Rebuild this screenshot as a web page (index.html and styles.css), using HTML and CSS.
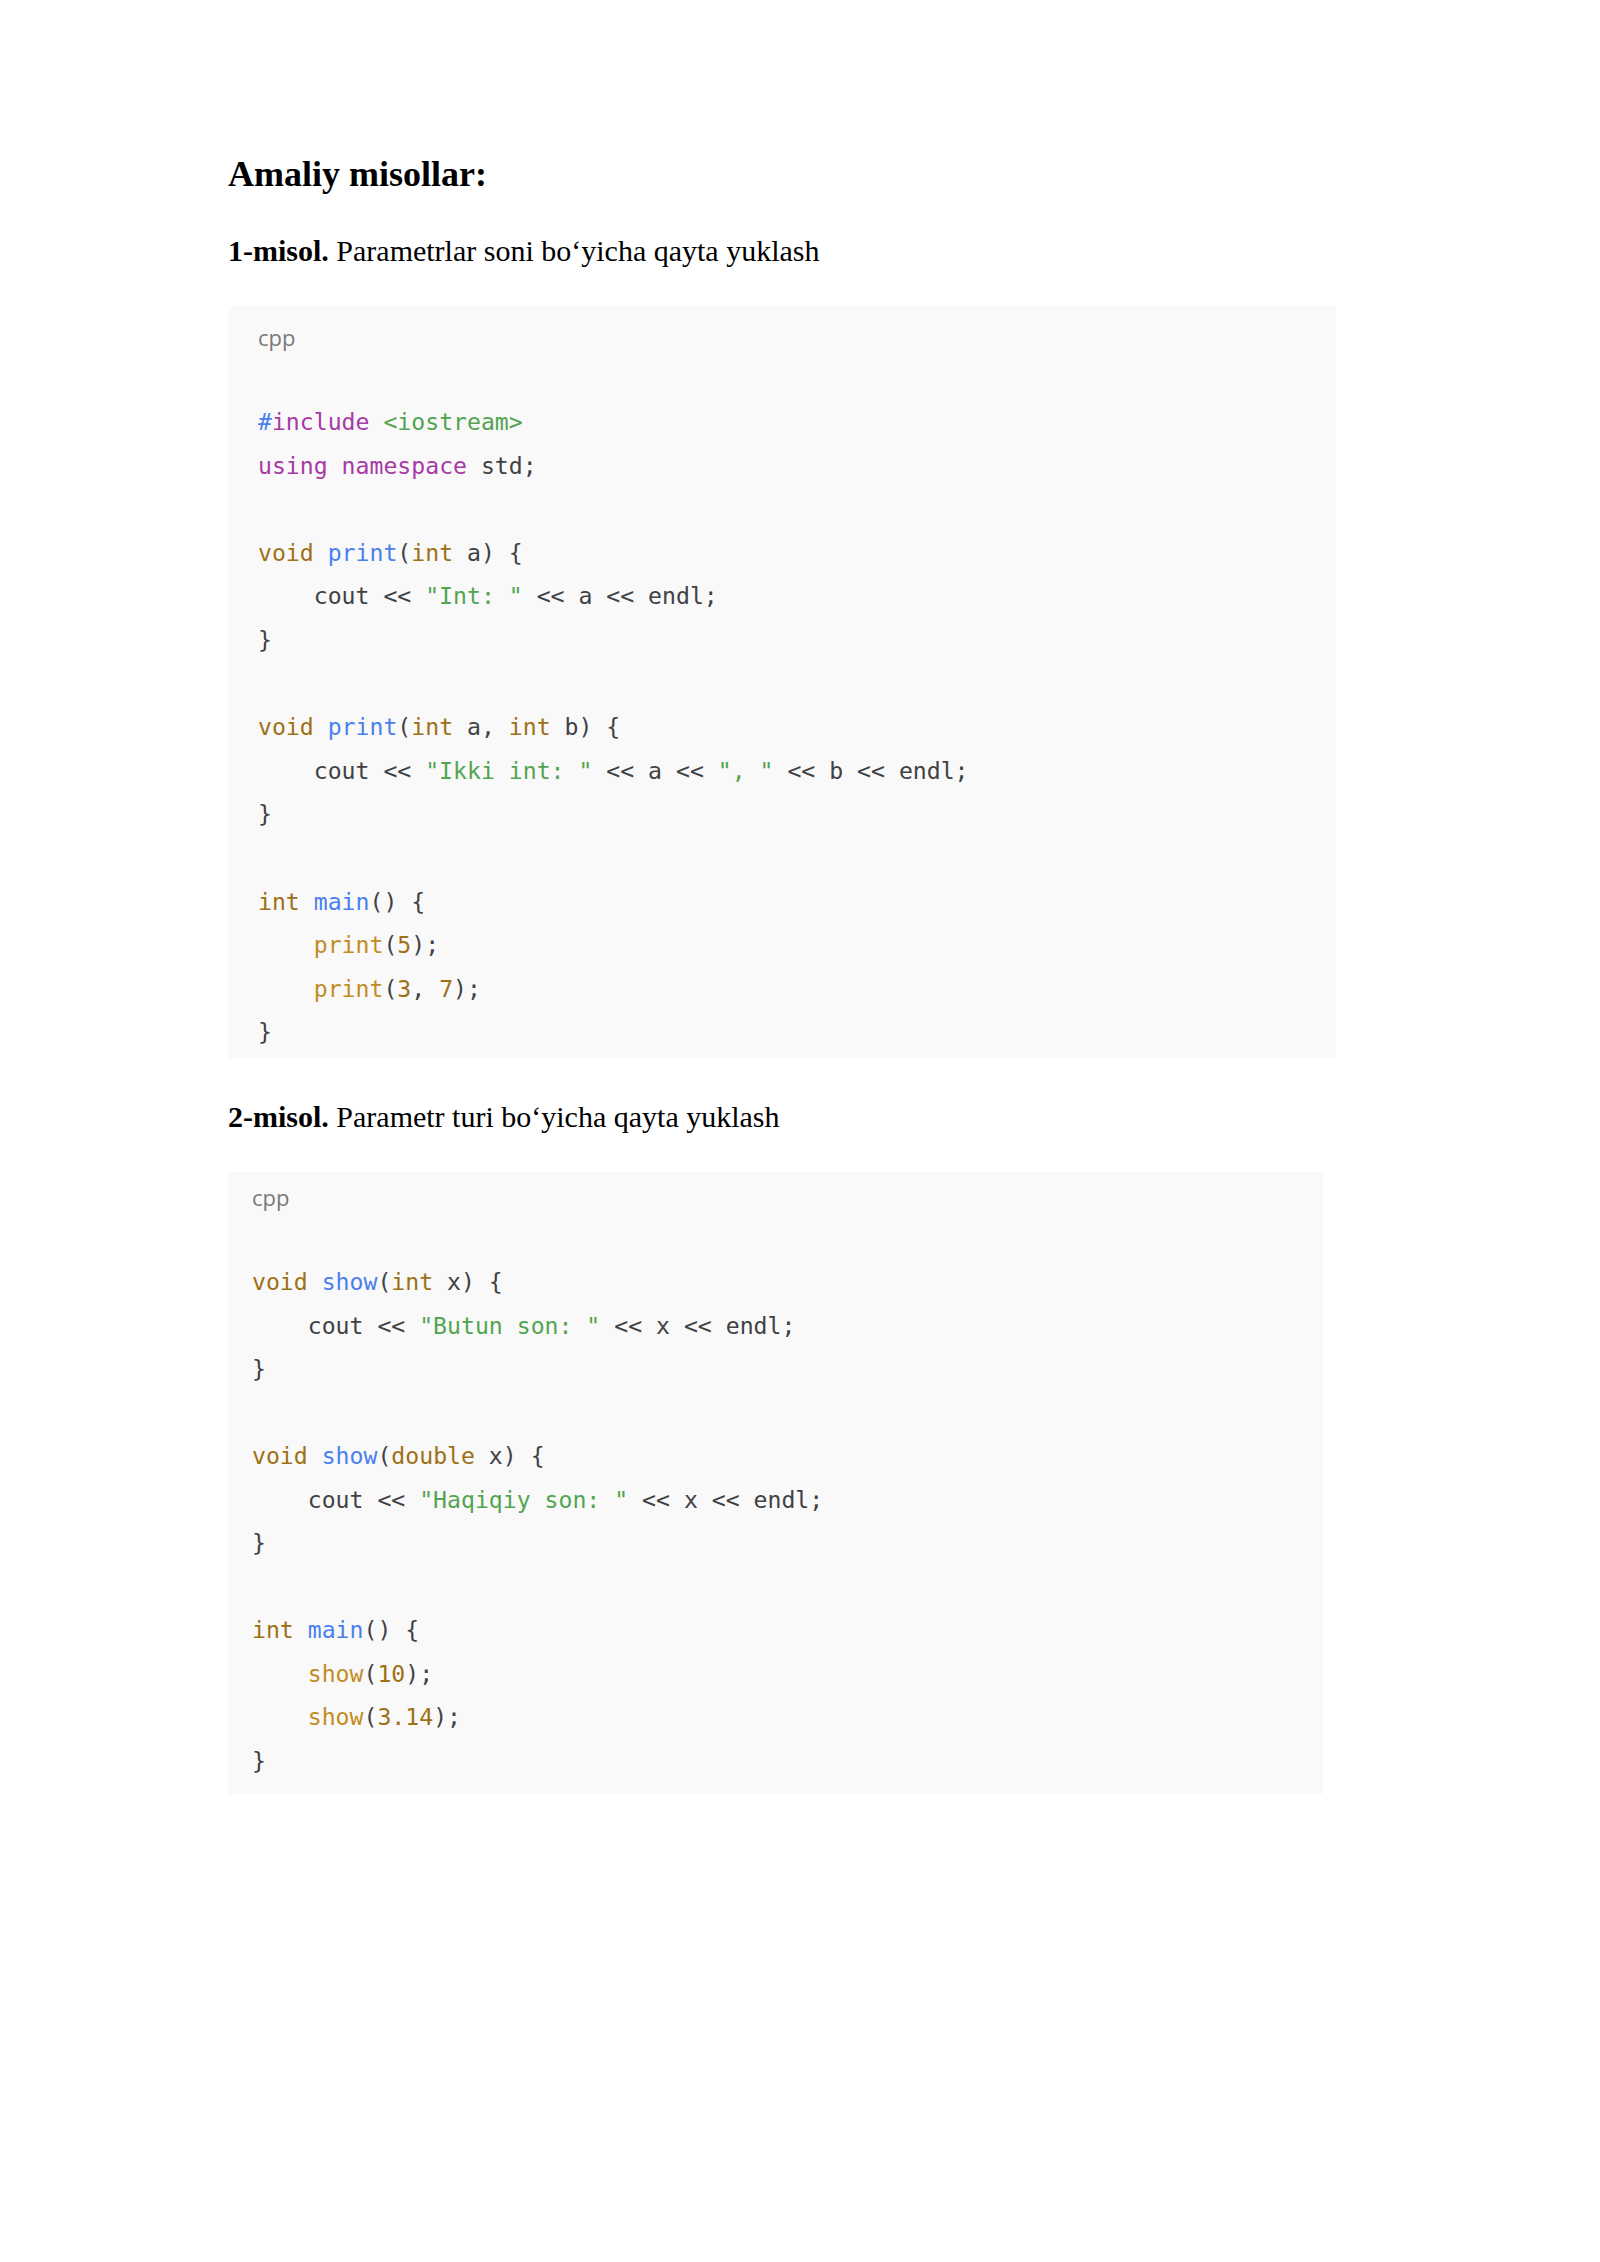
FILE: index.html
```html
<!DOCTYPE html>
<html lang="uz">
<head>
<meta charset="utf-8">
<title>Amaliy misollar</title>
<link rel="stylesheet" href="styles.css">
</head>
<body>
<main class="page">
<h1 class="title">Amaliy misollar:</h1>
<p class="example example--first"><b>1-misol.</b> Parametrlar soni bo‘yicha qayta yuklash</p>
<div class="code code--first">
<div class="code__lang">cpp</div>
<div class="code__body">
<div class="line"><span class="meta">#</span><span class="kw">include</span> <span class="str">&lt;iostream&gt;</span></div>
<div class="line"><span class="kw">using</span> <span class="kw">namespace</span> std;</div>
<div class="line"></div>
<div class="line"><span class="type">void</span> <span class="fn">print</span>(<span class="type">int</span> a) {</div>
<div class="line">    cout &lt;&lt; <span class="str">"Int: "</span> &lt;&lt; a &lt;&lt; endl;</div>
<div class="line">}</div>
<div class="line"></div>
<div class="line"><span class="type">void</span> <span class="fn">print</span>(<span class="type">int</span> a, <span class="type">int</span> b) {</div>
<div class="line">    cout &lt;&lt; <span class="str">"Ikki int: "</span> &lt;&lt; a &lt;&lt; <span class="str">", "</span> &lt;&lt; b &lt;&lt; endl;</div>
<div class="line">}</div>
<div class="line"></div>
<div class="line"><span class="type">int</span> <span class="fn">main</span>() {</div>
<div class="line">    <span class="call">print</span>(<span class="num">5</span>);</div>
<div class="line">    <span class="call">print</span>(<span class="num">3</span>, <span class="num">7</span>);</div>
<div class="line">}</div>
</div>
</div>
<p class="example example--second"><b>2-misol.</b> Parametr turi bo‘yicha qayta yuklash</p>
<div class="code code--second">
<div class="code__lang">cpp</div>
<div class="code__body">
<div class="line"><span class="type">void</span> <span class="fn">show</span>(<span class="type">int</span> x) {</div>
<div class="line">    cout &lt;&lt; <span class="str">"Butun son: "</span> &lt;&lt; x &lt;&lt; endl;</div>
<div class="line">}</div>
<div class="line"></div>
<div class="line"><span class="type">void</span> <span class="fn">show</span>(<span class="type">double</span> x) {</div>
<div class="line">    cout &lt;&lt; <span class="str">"Haqiqiy son: "</span> &lt;&lt; x &lt;&lt; endl;</div>
<div class="line">}</div>
<div class="line"></div>
<div class="line"><span class="type">int</span> <span class="fn">main</span>() {</div>
<div class="line">    <span class="call">show</span>(<span class="num">10</span>);</div>
<div class="line">    <span class="call">show</span>(<span class="num">3.14</span>);</div>
<div class="line">}</div>
</div>
</div>
</main>
</body>
</html>
```

FILE: styles.css
```css
html, body {
  margin: 0;
  padding: 0;
  background: #ffffff;
}

.page {
  padding: 152px 0 0 228px;
  color: #000000;
  font-family: "Liberation Serif", "Times New Roman", serif;
}

.title {
  margin: 0;
  font-size: 36px;
  line-height: 44px;
  font-weight: bold;
}

.example {
  margin: 0;
  font-size: 30px;
  line-height: 36px;
}

.example b {
  font-weight: bold;
}

.example--first {
  margin-top: 37px;
}

.example--second {
  margin-top: 41px;
}

.code {
  box-sizing: border-box;
  background: #f9f9f9;
  margin-top: 37px;
}

.code--first {
  width: 1108px;
  padding: 17px 0 3.5px 30px;
  border-top-left-radius: 10px;
}

.code--second {
  width: 1095px;
  padding: 11px 0 10px 24px;
}

.code__lang {
  font-family: "Open Sans", "Noto Sans", sans-serif;
  font-size: 22px;
  line-height: 28px;
  color: #7a7a7a;
}

.code__body {
  margin-top: 50px;
  font-family: "DejaVu Sans Mono", "Liberation Mono", monospace;
  font-size: 23.15px;
  color: #404145;
}

.line {
  height: 43.6px;
  line-height: 43.6px;
  white-space: pre;
}

.code--second .code__body {
  margin-top: 49.6px;
}

.code--second .line {
  height: 43.55px;
  line-height: 43.55px;
}

.meta { color: #4a80ee; }
.kw { color: #a83aa6; }
.str { color: #52a450; }
.type { color: #9e7016; }
.fn { color: #4a80ee; }
.call { color: #c28c1e; }
.num { color: #9e7016; }
```
